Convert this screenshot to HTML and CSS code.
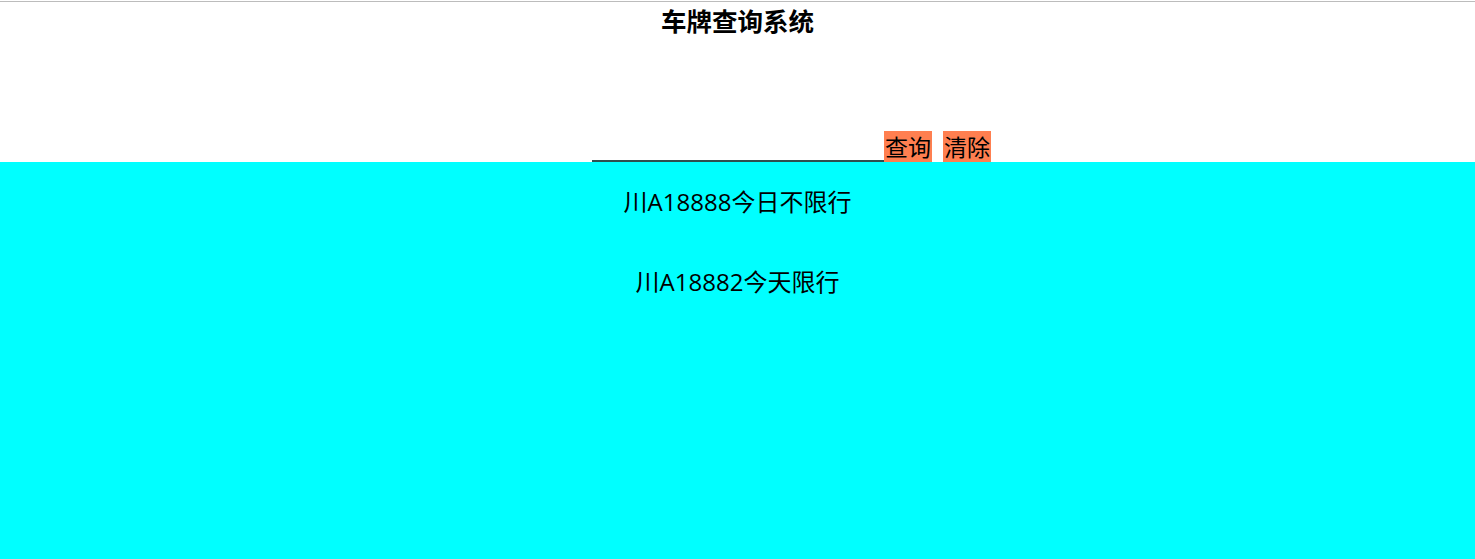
FILE: index.html
```html
<!DOCTYPE html>
<html lang="zh">
<head>
<meta charset="utf-8">
<title>车牌查询系统</title>
<link rel="stylesheet" href="styles.css">
</head>
<body>
<div class="topline"></div>
<header class="head">
  <h1 class="title">车牌查询系统</h1>
</header>
<div class="search">
  <div class="side"></div>
  <input class="plate" type="text">
  <div class="side btns">
    <button class="btn">查询</button>
    <button class="btn">清除</button>
  </div>
</div>
<main class="results">
  <p class="row">川A18888今日不限行</p>
  <p class="row">川A18882今天限行</p>
</main>
</body>
</html>
```

FILE: styles.css
```css
html, body {
  margin: 0;
  padding: 0;
  height: 100%;
}
body {
  display: flex;
  flex-direction: column;
  font-family: "Open Sans", "Noto Sans CJK SC", sans-serif;
  color: #000;
  background: #fff;
}
.topline {
  margin-top: 1px;
  height: 1px;
  background: #bcbcbc;
}
.head {
  display: flex;
  justify-content: center;
}
.title {
  margin: 2px 0 0 0;
  font-family: "Noto Sans CJK SC", sans-serif;
  font-size: 25.5px;
  line-height: 32px;
  font-weight: bold;
}
.search {
  display: grid;
  grid-template-columns: 1fr 292px 1fr;
  align-items: end;
  margin-top: 95px;
  padding-left: 1px;
}
.plate {
  box-sizing: border-box;
  width: 292px;
  height: 30px;
  margin: 0;
  padding: 0;
  border: none;
  border-bottom: 2px solid #2f4f4f;
  background: transparent;
  outline: none;
}
.btns {
  display: flex;
  gap: 11px;
}
.btn {
  margin: 0;
  padding: 0;
  height: 31px;
  width: 48px;
  border: none;
  background: #ff7f50;
  color: #000;
  font-family: "Noto Sans CJK SC", sans-serif;
  font-size: 23px;
  line-height: 31px;
}
.results {
  flex: 1;
  background: #00ffff;
  display: flex;
  flex-direction: column;
  align-items: center;
  padding-top: 24px;
  gap: 48px;
}
.row {
  margin: 0;
  font-size: 24px;
  line-height: 32px;
}
```
